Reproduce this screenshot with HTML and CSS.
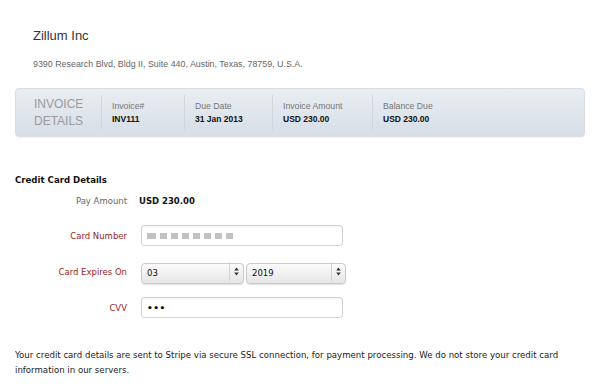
FILE: index.html
```html
<!DOCTYPE html>
<html lang="en">
<head>
    <meta charset="UTF-8">
    <meta name="viewport" content="width=device-width, initial-scale=1.0">
    <title>Invoice Payment</title>
    <link rel="stylesheet" href="styles.css">
</head>
<body>
    <div class="page">
        <!-- company header -->
        <div class="company">
            <h1>Zillum Inc</h1>
            <p class="address">9390 Research Blvd, Bldg II, Suite 440, Austin, Texas, 78759, U.S.A.</p>
        </div>

        <!-- invoice summary bar -->
        <div class="invoice-bar">
            <div class="invoice-title">INVOICE<br>DETAILS</div>
            <div class="invoice-cell cell-no">
                <span class="cell-label">Invoice#</span>
                <span class="cell-value">INV111</span>
            </div>
            <div class="invoice-cell cell-date">
                <span class="cell-label">Due Date</span>
                <span class="cell-value">31 Jan 2013</span>
            </div>
            <div class="invoice-cell cell-amount">
                <span class="cell-label">Invoice Amount</span>
                <span class="cell-value">USD 230.00</span>
            </div>
            <div class="invoice-cell">
                <span class="cell-label">Balance Due</span>
                <span class="cell-value">USD 230.00</span>
            </div>
        </div>

        <!-- card form -->
        <h2 class="section-title">Credit Card Details</h2>
        <div class="card-form">
            <div class="form-row pay-row">
                <label class="form-label">Pay Amount</label>
                <span class="pay-value">USD 230.00</span>
            </div>
            <div class="form-row">
                <label class="form-label required">Card Number</label>
                <div class="text-field">
                    <span class="masked">
                        <i class="wide"></i><i></i><i></i><i></i><i></i><i></i><i></i><i></i>
                    </span>
                </div>
            </div>
            <div class="form-row">
                <label class="form-label required">Card Expires On</label>
                <div class="select-pair">
                    <div class="select-box">
                        <select class="select-field"><option>03</option></select>
                        <span class="select-arrows">
                            <svg width="5" height="9" viewBox="0 0 5 9"><path d="M2.5 0.5 L4.8 3.6 L0.2 3.6 Z M2.5 8.5 L4.8 5.4 L0.2 5.4 Z" fill="#333"/></svg>
                        </span>
                    </div>
                    <div class="select-box">
                        <select class="select-field"><option>2019</option></select>
                        <span class="select-arrows">
                            <svg width="5" height="9" viewBox="0 0 5 9"><path d="M2.5 0.5 L4.8 3.6 L0.2 3.6 Z M2.5 8.5 L4.8 5.4 L0.2 5.4 Z" fill="#333"/></svg>
                        </span>
                    </div>
                </div>
            </div>
            <div class="form-row">
                <label class="form-label required">CVV</label>
                <div class="text-field cvv">&bull;&bull;&bull;</div>
            </div>
        </div>

        <p class="note">Your credit card details are sent to Stripe via secure SSL connection, for payment processing. We do not store your credit card information in our servers.</p>
    </div>
</body>
</html>
```

FILE: styles.css
```css
/* page base */
body {
    margin: 0;
    background-color: #ffffff;
    font-family: "DejaVu Sans", sans-serif;
    color: #222;
}

.page {
    padding: 28px 15px 0 15px;
}

/* company header */
.company {
    padding-left: 18px;
    font-family: "Liberation Sans", Arial, sans-serif;
}

.company h1 {
    margin: 0;
    font-size: 13px;
    line-height: 16px;
    font-weight: normal;
    color: #333;
}

.address {
    margin: 14px 0 0 0;
    font-size: 8.9px;
    line-height: 12px;
    color: #666;
}

/* invoice bar */
.invoice-bar {
    display: flex;
    align-items: center;
    margin-top: 18px;
    height: 49px;
    box-sizing: border-box;
    padding-left: 18px;
    border-radius: 4px;
    border: 1px solid #d9dfe5;
    background: linear-gradient(#e9eef2, #d6dee6);
    box-shadow: 0 1px 1px rgba(0, 0, 0, 0.06);
    font-family: "Liberation Sans", Arial, sans-serif;
}

.invoice-title {
    width: 67px;
    font-size: 12px;
    line-height: 17px;
    color: #9a9a9a;
}

.invoice-cell {
    display: flex;
    flex-direction: column;
    justify-content: center;
    gap: 2px;
    height: 35px;
    padding-left: 10px;
    border-left: 1px solid #d0d7de;
}

.cell-no { width: 72px; }
.cell-date { width: 77px; }
.cell-amount { width: 89px; }

.cell-label {
    font-size: 8.7px;
    line-height: 11px;
    color: #777;
}

.cell-value {
    font-size: 8.5px;
    line-height: 11px;
    font-weight: bold;
    color: #111;
}

/* card form */
.section-title {
    margin: 37px 0 4px 0;
    font-size: 8.6px;
    line-height: 12px;
    font-weight: bold;
    color: #111;
}

.card-form {
    display: flex;
    flex-direction: column;
    gap: 15px;
}

.form-row {
    display: flex;
    align-items: center;
    gap: 14px;
    height: 21px;
}

.pay-row {
    margin-bottom: -1px;
}

.form-label {
    width: 112px;
    text-align: right;
    font-size: 8.5px;
    color: #666;
}

.form-label.required {
    color: #982525;
}

.pay-value {
    margin-left: -2px;
    font-size: 8.5px;
    font-weight: bold;
    color: #111;
}

.text-field {
    display: flex;
    align-items: center;
    width: 202px;
    height: 21px;
    box-sizing: border-box;
    padding-left: 5px;
    border: 1px solid #d4d4d4;
    border-radius: 3px;
    background-color: white;
    box-shadow: inset 0 1px 1px rgba(0, 0, 0, 0.04);
}

.masked {
    display: flex;
    gap: 4px;
    filter: blur(0.6px);
}

.masked i {
    display: block;
    width: 7px;
    height: 6px;
    background-color: #c2c2c2;
}

.masked i.wide {
    width: 9px;
}

.cvv {
    font-size: 9px;
    font-weight: bold;
    color: #111;
    letter-spacing: 0.5px;
}

/* expiry selects */
.select-pair {
    display: flex;
    gap: 2px;
}

.select-box {
    position: relative;
    width: 100px;
    height: 21px;
}

.select-box:first-child {
    width: 103px;
}

.select-field {
    appearance: none;
    -webkit-appearance: none;
    width: 100%;
    height: 21px;
    margin: 0;
    padding: 0 0 0 5px;
    border: 1px solid #c9c9c9;
    border-radius: 4px;
    background: linear-gradient(#fbfbfb, #e6e6e6);
    box-shadow: 0 1px 1px rgba(0, 0, 0, 0.12);
    font-family: "DejaVu Sans", sans-serif;
    font-size: 8.5px;
    color: #111;
}

.select-arrows {
    position: absolute;
    top: 1px;
    right: 1px;
    bottom: 1px;
    width: 13px;
    display: flex;
    align-items: center;
    justify-content: center;
    border-left: 1px solid #d2d2d2;
}

/* footer note */
.note {
    margin: 30px 0 0 0;
    font-size: 8.6px;
    line-height: 15px;
    color: #222;
}
```
